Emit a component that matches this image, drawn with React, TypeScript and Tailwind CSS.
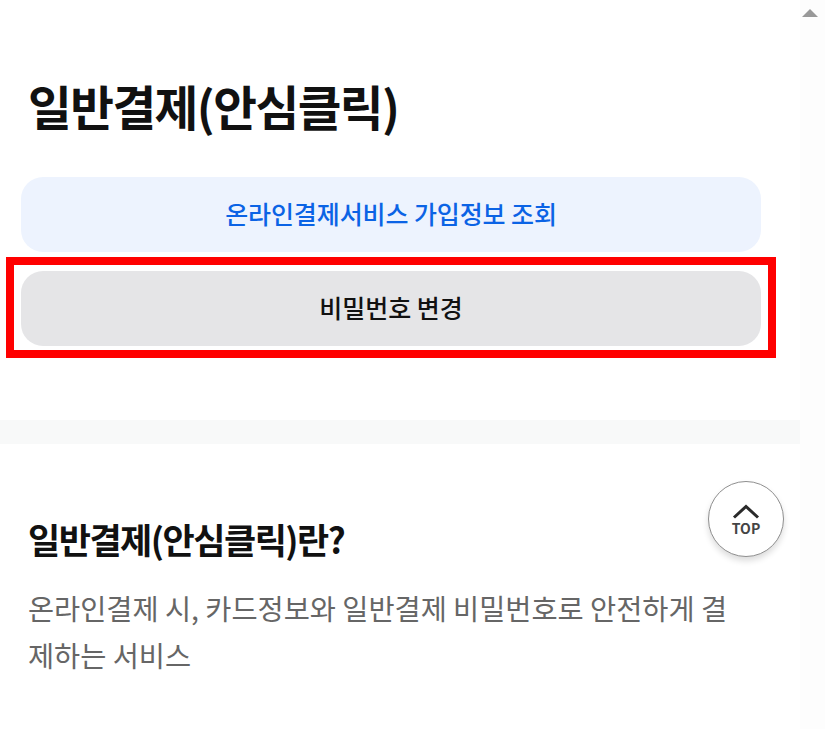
const font = '[font-family:"Noto_Sans_CJK_KR","Liberation_Sans",sans-serif]';

function ScrollTop() {
  return (
    <button className="absolute left-[708px] top-[481px] flex h-[76px] w-[76px] flex-col items-center justify-center rounded-full border-[1.5px] border-[#8f8f8f] bg-white shadow-[0_4px_6px_rgba(0,0,0,0.14)]">
      <svg width="28" height="15" viewBox="0 0 28 15" fill="none" className="mt-[1px]">
        <path d="M2 13.5 14 2.5l12 11" stroke="#2a2a2a" strokeWidth="3" />
      </svg>
      <span className="mt-[1px] text-[14px] leading-[16px] font-bold text-[#444]">TOP</span>
    </button>
  );
}

export default function App() {
  return (
    <div className={`relative h-[729px] w-[825px] overflow-hidden bg-white ${font}`}>
      <div className="flex h-full">
        {/* Page content */}
        <div className="w-[800px] shrink-0">
          <div className="px-[21px] pt-[75px]">
            <h1 className="pl-[7px] text-[47.5px] leading-[62px] font-semibold tracking-[-1.5px] text-[#111]">
              일반결제(안심클릭)
            </h1>
            <div className="mt-[40px] flex w-[740px] flex-col gap-[19px]">
              <button className="h-[75px] rounded-[22px] bg-[#edf3fe] pb-[2px] text-[25px] font-medium tracking-[-0.1px] text-[#0b63e5]">
                온라인결제서비스 가입정보 조회
              </button>
              <button className="h-[75px] rounded-[22px] bg-[#e5e5e7] pb-[2px] text-[25px] font-medium text-[#111]">
                비밀번호 변경
              </button>
            </div>
          </div>

          <div className="mt-[74px] h-[24px] bg-[#f8f9f9]" />

          <div className="px-[28px] pt-[69px]">
            <h2 className="text-[35px] leading-[52px] font-semibold tracking-[-1.5px] text-[#111]">
              일반결제(안심클릭)란?
            </h2>
            <p className="mt-[19px] w-[710px] text-[28.4px] leading-[47px] break-all text-[#666]">
              온라인결제 시, 카드정보와 일반결제 비밀번호로 안전하게 결제하는 서비스
            </p>
          </div>
        </div>

        {/* Scrollbar */}
        <div className="flex-1 bg-[#fdfdfd] pt-[9px] pl-[2px]">
          <div className="h-0 w-0 border-x-[8px] border-b-[8px] border-x-transparent border-b-[#999]" />
        </div>
      </div>

      <ScrollTop />

      {/* Annotation box over the second button */}
      <div className="pointer-events-none absolute left-[6px] top-[257px] h-[101px] w-[770px] border-[8px] border-[#ff0000]" />
    </div>
  );
}
